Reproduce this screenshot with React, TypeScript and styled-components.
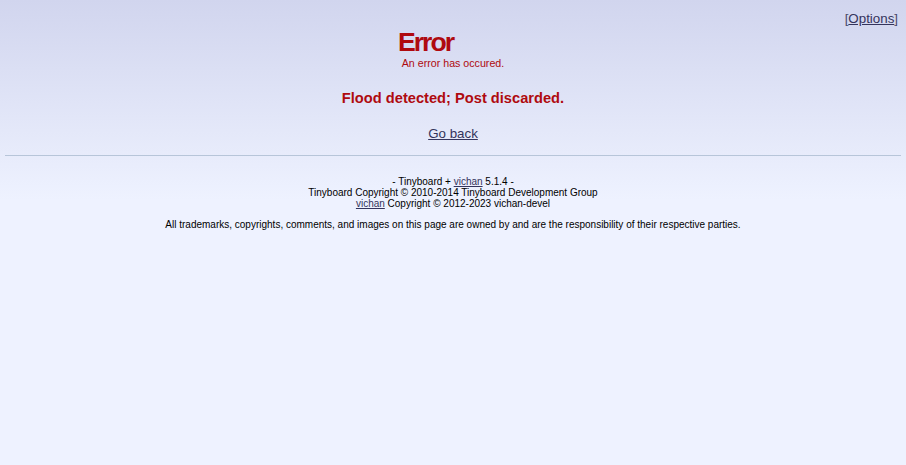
import styled, { createGlobalStyle } from "styled-components";

const GlobalStyle = createGlobalStyle`
  html {
    height: 100%;
    background-color: #eef2ff;
  }
  body {
    margin: 0;
    padding: 0 5px;
    min-height: 100%;
    box-sizing: border-box;
    font-family: "Liberation Sans", Arial, Helvetica, sans-serif;
    font-size: 10pt;
    color: #000000;
    background: #eef2ff linear-gradient(#d1d5ee, #eef2ff) no-repeat;
    background-size: 100% 200px;
  }
`;

const FOOTER_LINES = [
  { before: "- Tinyboard + ", linkText: "vichan", after: " 5.1.4 -" },
  { before: "Tinyboard Copyright © 2010-2014 Tinyboard Development Group", linkText: "", after: "" },
  { before: "", linkText: "vichan", after: " Copyright © 2012-2023 vichan-devel" },
];

export default function App() {
  return (
    <>
      <GlobalStyle />
      <TopBar>
        [<Link href="#">Options</Link>]
      </TopBar>
      <Header>
        <Title>Error</Title>
        <Subtitle>An error has occured.</Subtitle>
      </Header>
      <Message>Flood detected; Post discarded.</Message>
      <Back>
        <Link href="#">Go back</Link>
      </Back>
      <Rule />
      <Footer>
        <Unimportant $top={20}>
          {FOOTER_LINES.map((line, i) => (
            <Line key={i}>
              {line.before}
              {line.linkText && <Link href="#">{line.linkText}</Link>}
              {line.after}
            </Line>
          ))}
        </Unimportant>
        <Unimportant $top={10}>
          All trademarks, copyrights, comments, and images on this page are owned by and
          are the responsibility of their respective parties.
        </Unimportant>
      </Footer>
    </>
  );
}

const TopBar = styled.div`
  display: flex;
  justify-content: flex-end;
  padding: 11px 3px 0 0;
  line-height: 16px;
  color: #4a4a6a;
`;

const Link = styled.a`
  color: #34345c;
  text-decoration: underline;
`;

const Header = styled.header`
  display: flex;
  flex-direction: column;
  align-items: center;
  color: #af0a0f;
`;

const Title = styled.h1`
  margin: 0;
  padding-right: 55px;
  font-family: "Liberation Sans", Tahoma, sans-serif;
  font-size: 20pt;
  font-weight: bold;
  letter-spacing: -2px;
  line-height: 30px;
`;

const Subtitle = styled.div`
  font-size: 8pt;
  line-height: 12px;
`;

const Message = styled.h2`
  margin: 21px 0 0;
  text-align: center;
  color: #af0a0f;
  font-size: 11pt;
  font-weight: bold;
  line-height: 17px;
`;

const Back = styled.p`
  margin: 19px 0 0;
  text-align: center;
  line-height: 15px;
`;

const Rule = styled.hr`
  margin: 14px 0 0;
  border: none;
  border-top: 1px solid #b7c5d9;
  height: 0;
`;

const Footer = styled.footer`
  display: flex;
  flex-direction: column;
  align-items: center;
`;

const Unimportant = styled.p<{ $top: number }>`
  margin: ${({ $top }) => $top}px 0 0;
  font-size: 10px;
  line-height: 11px;
  text-align: center;
`;

const Line = styled.span`
  display: block;
`;
